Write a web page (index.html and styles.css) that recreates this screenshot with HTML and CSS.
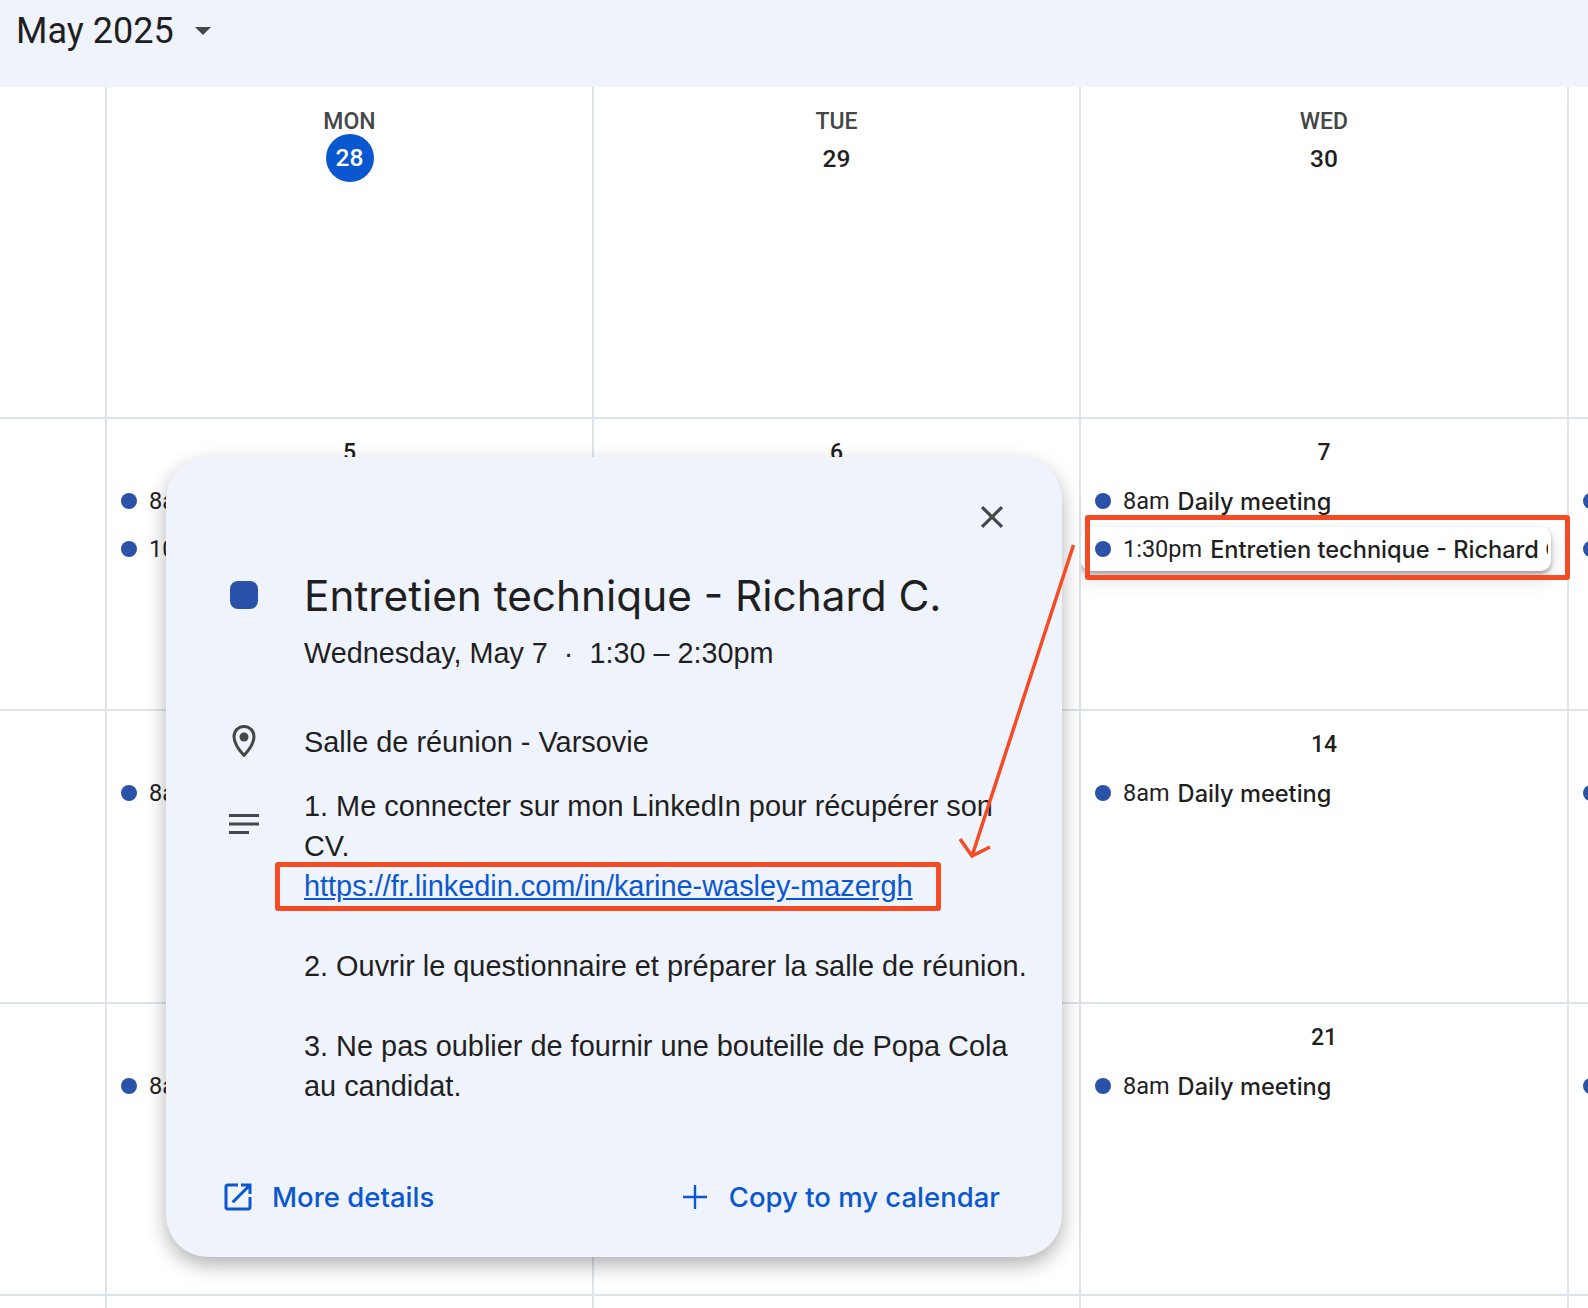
FILE: index.html
```html
<!DOCTYPE html>
<html lang="en">
<head>
    <meta charset="UTF-8">
    <title>May 2025</title>
    <link rel="stylesheet" href="styles.css">
</head>
<body>
    <header class="topbar">
        <span class="month">May 2025</span>
        <span class="caret"></span>
    </header>

    <main class="grid">
        <div class="cell first"></div>
        <div class="cell head">
            <div class="dayname">MON</div>
            <div class="daynum today">28</div>
        </div>
        <div class="cell head">
            <div class="dayname">TUE</div>
            <div class="daynum">29</div>
        </div>
        <div class="cell head">
            <div class="dayname">WED</div>
            <div class="daynum">30</div>
        </div>
        <div class="cell last"></div>

        <div class="cell first"></div>
        <div class="cell">
            <div class="date">5</div>
            <div class="event"><i class="dot"></i><span class="time">8am</span></div>
            <div class="event"><i class="dot"></i><span class="time">10am</span></div>
        </div>
        <div class="cell">
            <div class="date">6</div>
        </div>
        <div class="cell">
            <div class="date">7</div>
            <div class="event"><i class="dot"></i><span class="time">8am</span><b>Daily meeting</b></div>
            <div class="event active"><i class="dot"></i><span class="time">1:30pm</span><b>Entretien technique - Richard C.</b></div>
        </div>
        <div class="cell last">
            <div class="date">&nbsp;</div>
            <div class="event"><i class="dot"></i></div>
            <div class="event"><i class="dot"></i></div>
        </div>

        <div class="cell first"></div>
        <div class="cell">
            <div class="date">&nbsp;</div>
            <div class="event"><i class="dot"></i><span class="time">8am</span></div>
        </div>
        <div class="cell">
            <div class="date">&nbsp;</div>
        </div>
        <div class="cell">
            <div class="date">14</div>
            <div class="event"><i class="dot"></i><span class="time">8am</span><b>Daily meeting</b></div>
        </div>
        <div class="cell last">
            <div class="date">&nbsp;</div>
            <div class="event"><i class="dot"></i></div>
        </div>

        <div class="cell first"></div>
        <div class="cell">
            <div class="date">&nbsp;</div>
            <div class="event"><i class="dot"></i><span class="time">8am</span></div>
        </div>
        <div class="cell">
            <div class="date">&nbsp;</div>
        </div>
        <div class="cell">
            <div class="date">21</div>
            <div class="event"><i class="dot"></i><span class="time">8am</span><b>Daily meeting</b></div>
        </div>
        <div class="cell last">
            <div class="date">&nbsp;</div>
            <div class="event"><i class="dot"></i></div>
        </div>

        <div class="cell first"></div>
        <div class="cell"></div>
        <div class="cell"></div>
        <div class="cell"></div>
        <div class="cell last"></div>
    </main>

    <section class="popup">
        <button class="close" aria-label="Close">
            <svg width="38" height="38" viewBox="0 0 24 24"><path d="M19 6.41 17.59 5 12 10.59 6.41 5 5 6.41 10.59 12 5 17.59 6.41 19 12 13.41 17.59 19 19 17.59 13.41 12z" fill="#444746"/></svg>
        </button>

        <div class="row title-row">
            <div class="icon"><span class="swatch"></span></div>
            <div>
                <h1>Entretien technique - Richard C.</h1>
                <p class="when">Wednesday, May 7 &nbsp;·&nbsp; 1:30 – 2:30pm</p>
            </div>
        </div>

        <div class="row place-row">
            <div class="icon">
                <svg width="40" height="40" viewBox="0 0 40 40">
                    <path d="M20 33.500C13.500 26.500 10 21 10 14.500A10 10 0 0 1 30 14.500C30 21 26.500 26.500 20 33.500Z" fill="none" stroke="#444746" stroke-width="3" stroke-linejoin="round"/>
                    <circle cx="20" cy="15" r="4.500" fill="#444746"/>
                </svg>
            </div>
            <div class="text">Salle de réunion - Varsovie</div>
        </div>

        <div class="row desc-row">
            <div class="icon">
                <svg width="40" height="40" viewBox="0 0 24 24"><path d="M3 6h18v1.800H3zM3 11.100h18v1.800H3zM3 16.200h12v1.800H3z" fill="#444746"/></svg>
            </div>
            <div class="text desc">
                1. Me connecter sur mon LinkedIn pour récupérer son CV.<br>
                <a href="#">https://fr.linkedin.com/in/karine-wasley-mazergh</a><br>
                <br>
                2. Ouvrir le questionnaire et préparer la salle de réunion.<br>
                <br>
                3. Ne pas oublier de fournir une bouteille de Popa Cola au candidat.
            </div>
        </div>

        <div class="actions">
            <a class="action" href="#">
                <svg width="36" height="36" viewBox="0 0 24 24"><path d="M19 19H5V5h7V3H5c-1.110 0-2 .9-2 2v14c0 1.100.89 2 2 2h14c1.100 0 2-.9 2-2v-7h-2v7zM14 3v2h3.590l-9.830 9.830 1.410 1.410L19 6.410V10h2V3h-7z" fill="#0b57d0"/></svg>
                More details
            </a>
            <a class="action" href="#">
                <svg width="36" height="36" viewBox="0 0 24 24"><path d="M20 12.800h-7.200V20h-1.600v-7.200H4v-1.600h7.200V4h1.600v7.200H20z" fill="#0b57d0"/></svg>
                Copy to my calendar
            </a>
        </div>
    </section>

    <!-- annotations -->
    <div class="mark mark-event"></div>
    <div class="mark mark-link"></div>
    <svg class="arrow" width="130" height="330" viewBox="0 0 130 330">
        <path d="M123.500 5 L22 316 M10 299 L22 316 L40 307" fill="none" stroke="#f44b25" stroke-width="3.500"/>
    </svg>
</body>
</html>
```

FILE: styles.css
```css
* {
    box-sizing: border-box;
}
body {
    margin: 0;
    height: 1308px;
    overflow: hidden;
    background-color: white;
    font-family: Roboto, Arial, sans-serif;
    color: #1f1f1f;
}

.topbar {
    display: flex;
    align-items: center;
    gap: 21px;
    height: 87px;
    padding: 0 16px 26px;
    background-color: #eff3fb;
}
.month {
    font-size: 36px;
}
.caret {
    width: 0;
    height: 0;
    border-left: 8px solid transparent;
    border-right: 8px solid transparent;
    border-top: 8px solid #444746;
}

.grid {
    display: grid;
    grid-template-columns: 105px 487px 487px 488px 1fr;
    grid-template-rows: 332px 292px 293px 292px 1fr;
    height: 1221px;
}
.cell {
    border-left: 2px solid #dde3ea;
    border-bottom: 2px solid #dde3ea;
    padding-top: 20px;
    min-width: 0;
    overflow: hidden;
}
.cell.first {
    border-left: 0;
}
.cell.head {
    padding-top: 22px;
}
.dayname {
    font-size: 23px;
    line-height: 26px;
    font-weight: 500;
    text-align: center;
    color: #444746;
}
.daynum {
    width: 48px;
    height: 48px;
    margin: 0 auto;
    font-size: 24.5px;
    font-weight: 500;
    line-height: 48px;
    text-align: center;
}
.daynum.today {
    margin-top: -1px;
    background-color: #0b57d0;
    color: white;
    border-radius: 50%;
}
.date {
    font-size: 23px;
    font-weight: 500;
    line-height: 28px;
    text-align: center;
}
.event {
    display: flex;
    align-items: center;
    height: 48px;
    padding-left: 14px;
    font-size: 24px;
    white-space: nowrap;
}
.date + .event {
    margin-top: 10px;
}
.time {
    font-size: 23.5px;
}
.event b {
    min-width: 0;
    overflow: hidden;
    font-family: Inter, Roboto, sans-serif;
    font-size: 23.6px;
    font-weight: 500;
    margin-left: 8px;
}
.dot {
    flex: none;
    width: 16px;
    height: 16px;
    margin-right: 12px;
    background-color: #2952a8;
    border-radius: 50%;
}
.event.active {
    position: relative;
    height: 44px;
    width: 470px;
    margin-top: 2px;
    padding-right: 3px;
    background-color: white;
    border-radius: 10px;
    box-shadow: 0 3px 4px rgba(0, 0, 0, 0.3), 0 8px 20px rgba(0, 0, 0, 0.15);
}

.popup {
    position: absolute;
    left: 166px;
    top: 457px;
    width: 896px;
    height: 800px;
    padding: 0 34px 0 60px;
    background-color: #eff3fb;
    border-radius: 42px;
    box-shadow: 0 8px 20px rgba(0, 0, 0, 0.3);
}
.close {
    position: absolute;
    top: 41px;
    right: 51px;
    width: 38px;
    height: 38px;
    padding: 0;
    border: 0;
    background: none;
}
.row {
    display: flex;
}
.icon {
    flex: none;
    width: 36px;
    margin-right: 42px;
    display: flex;
    justify-content: center;
}
.icon svg {
    flex: none;
}
.title-row {
    margin-top: 115px;
}
.title-row .icon {
    padding-top: 9px;
}
.swatch {
    width: 28px;
    height: 28px;
    background-color: #2952a8;
    border-radius: 8px;
}
h1 {
    margin: 0;
    font-family: Inter, Roboto, sans-serif;
    font-size: 42.3px;
    font-weight: 400;
    line-height: 48px;
    white-space: nowrap;
}
.when {
    margin: 13px 0 0;
    font-family: "Liberation Sans", Arial, sans-serif;
    font-size: 28.8px;
    line-height: 40px;
    white-space: pre-wrap;
}
.place-row {
    margin-top: 49px;
    align-items: center;
}
.text {
    font-size: 28.9px;
    line-height: 40px;
    font-family: "Liberation Sans", Arial, sans-serif;
}
.desc-row {
    margin-top: 24px;
}
.desc-row .icon {
    padding-top: 18px;
}
.desc a {
    color: #0b57d0;
}
.actions {
    position: absolute;
    left: 54px;
    right: 62px;
    bottom: 42px;
    display: flex;
    justify-content: space-between;
}
.action {
    display: flex;
    align-items: center;
    gap: 16px;
    font-family: Inter, Roboto, sans-serif;
    font-size: 27.5px;
    font-weight: 500;
    color: #0b57d0;
    text-decoration: none;
}

.mark {
    position: absolute;
    border: 5px solid #f44b25;
    border-radius: 3px;
}
.mark-event {
    left: 1085px;
    top: 515px;
    width: 485px;
    height: 65px;
}
.mark-link {
    left: 275px;
    top: 862px;
    width: 666px;
    height: 49px;
}
.arrow {
    position: absolute;
    left: 950px;
    top: 540px;
}
```
